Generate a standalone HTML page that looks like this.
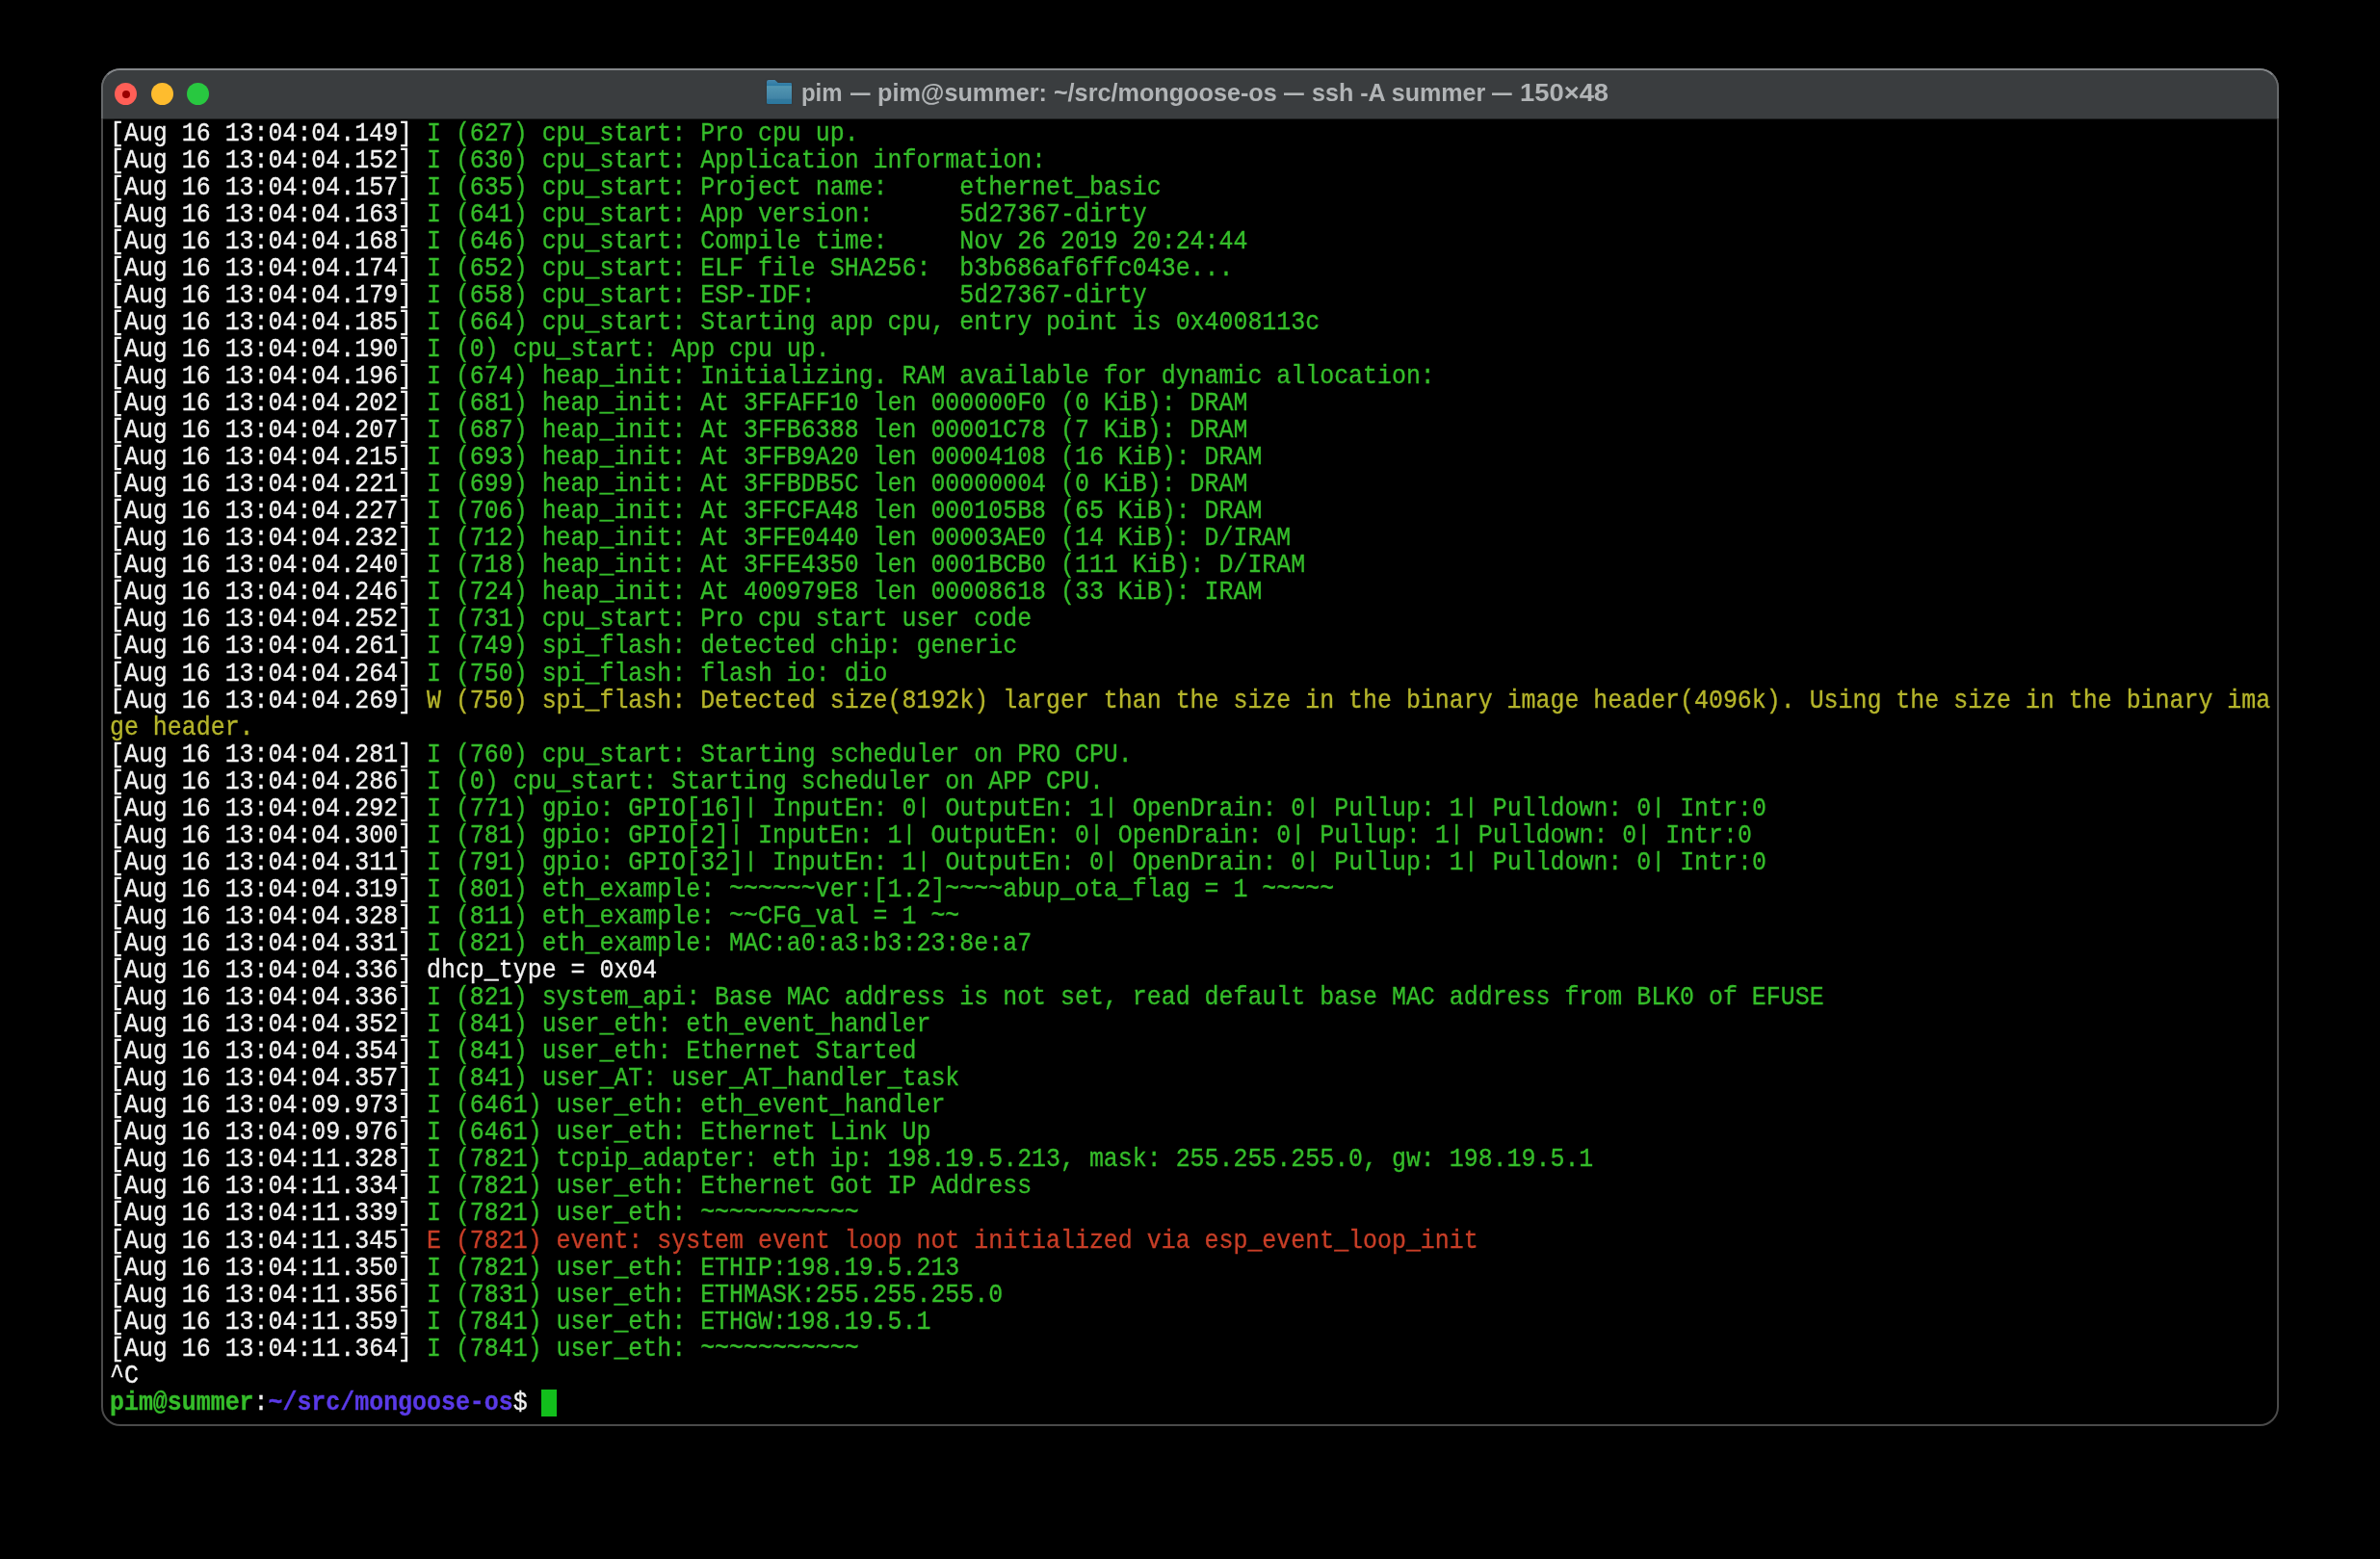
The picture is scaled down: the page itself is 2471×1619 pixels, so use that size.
<!DOCTYPE html>
<html><head><meta charset="utf-8">
<style>
html,body{margin:0;padding:0;background:#000;width:2471px;height:1619px;overflow:hidden;}
.win{position:absolute;left:105px;top:71px;width:2261px;height:1410px;box-sizing:border-box;border:2px solid #4a4a4a;border-radius:20px;background:#000;overflow:hidden;}
.tb{position:absolute;left:0;top:0;right:0;height:50px;background:#3a3d3f;border-bottom:1px solid #1e2021;}
.tbhl{position:absolute;left:105px;top:71px;width:2261px;height:52px;box-sizing:border-box;border-top:2px solid #84878a;border-left:2px solid #65686a;border-right:2px solid #65686a;border-radius:20px 20px 0 0;pointer-events:none;}
.dot{position:absolute;width:23px;height:23px;border-radius:50%;top:86px;}
.title{position:absolute;top:80px;left:832px;font-family:"Liberation Sans",sans-serif;font-weight:bold;font-size:26.6px;color:#b1b4b6;white-space:pre;line-height:32px;transform-origin:0 0;}
.folder{position:absolute;left:795.8px;top:82.9px;width:26.5px;height:25px;filter:drop-shadow(0 0.5px 0.8px rgba(0,0,0,0.2));}
.term{position:absolute;left:113.8px;top:124.6px;font-family:"Liberation Mono",monospace;font-size:28px;line-height:28.055px;color:#f2f2f2;transform:scaleX(0.89);transform-origin:0 0;-webkit-text-stroke:0.35px currentColor;}
.l{height:28.055px;white-space:pre;}
.pp{display:inline-block;transform:translateY(-2.6px) scaleY(0.76);transform-origin:50% 62%;}
.pg{color:#35bd2a;font-weight:bold;}
.pb{color:#5a3ae8;font-weight:bold;}
.cur{position:absolute;left:562.4px;top:1443px;width:15.2px;height:28.2px;background:#12bf1c;}
</style></head><body>
<div class="win"><div class="tb"></div></div>
<div class="tbhl"></div>
<div class="dot" style="left:119px;background:#ff5f57;"><div style="position:absolute;left:7.5px;top:7.5px;width:8px;height:8px;border-radius:50%;background:#9a0000;"></div></div>
<div class="dot" style="left:157px;background:#febc2e;"></div>
<div class="dot" style="left:194px;background:#28c840;"></div>
<svg class="folder" viewBox="0 0 26.5 25"><defs><linearGradient id="fb" x1="0" y1="0" x2="0" y2="1"><stop offset="0" stop-color="#4787ad"/><stop offset="0.25" stop-color="#2a7aa3"/><stop offset="0.35" stop-color="#1e6c96"/></linearGradient><linearGradient id="ff" x1="0" y1="0" x2="0" y2="1"><stop offset="0" stop-color="#5b9db5"/><stop offset="0.08" stop-color="#5194b0"/><stop offset="0.7" stop-color="#4184a6"/><stop offset="0.72" stop-color="#34799c"/><stop offset="1" stop-color="#2a789f"/></linearGradient></defs><path d="M0 2 Q0 0 2 0 L8.5 0 L11.8 3 L24.8 3 Q26.5 3 26.5 4.8 L26.5 23.2 Q26.5 25 24.8 25 L1.8 25 Q0 25 0 23.2 Z" fill="url(#fb)"/><path d="M0 6.3 L26.5 6.3 L26.5 23.2 Q26.5 25 24.8 25 L1.8 25 Q0 25 0 23.2 Z" fill="url(#ff)"/></svg>
<div class="title" style="left:832.4px;transform:scaleX(0.9)">pim</div>
<div class="title" style="left:883.2px;transform:scaleX(0.771)">—</div>
<div class="title" style="left:911px;transform:scaleX(0.948)">pim@summer: ~/src/mongoose-os</div>
<div class="title" style="left:1333.4px;transform:scaleX(0.782)">—</div>
<div class="title" style="left:1361.7px;transform:scaleX(0.943)">ssh -A summer</div>
<div class="title" style="left:1549.3px;transform:scaleX(0.778)">—</div>
<div class="title" style="left:1577.9px;transform:scaleX(1.029)">150×48</div>
<div class="term">
<div class="l">[Aug 16 13:04:04.149] <span style="color:#35bd2a">I (627) cpu_start: Pro cpu up.</span></div>
<div class="l">[Aug 16 13:04:04.152] <span style="color:#35bd2a">I (630) cpu_start: Application information:</span></div>
<div class="l">[Aug 16 13:04:04.157] <span style="color:#35bd2a">I (635) cpu_start: Project name:     ethernet_basic</span></div>
<div class="l">[Aug 16 13:04:04.163] <span style="color:#35bd2a">I (641) cpu_start: App version:      5d27367-dirty</span></div>
<div class="l">[Aug 16 13:04:04.168] <span style="color:#35bd2a">I (646) cpu_start: Compile time:     Nov 26 2019 20:24:44</span></div>
<div class="l">[Aug 16 13:04:04.174] <span style="color:#35bd2a">I (652) cpu_start: ELF file SHA256:  b3b686af6ffc043e...</span></div>
<div class="l">[Aug 16 13:04:04.179] <span style="color:#35bd2a">I (658) cpu_start: ESP-IDF:          5d27367-dirty</span></div>
<div class="l">[Aug 16 13:04:04.185] <span style="color:#35bd2a">I (664) cpu_start: Starting app cpu, entry point is 0x4008113c</span></div>
<div class="l">[Aug 16 13:04:04.190] <span style="color:#35bd2a">I (0) cpu_start: App cpu up.</span></div>
<div class="l">[Aug 16 13:04:04.196] <span style="color:#35bd2a">I (674) heap_init: Initializing. RAM available for dynamic allocation:</span></div>
<div class="l">[Aug 16 13:04:04.202] <span style="color:#35bd2a">I (681) heap_init: At 3FFAFF10 len 000000F0 (0 KiB): DRAM</span></div>
<div class="l">[Aug 16 13:04:04.207] <span style="color:#35bd2a">I (687) heap_init: At 3FFB6388 len 00001C78 (7 KiB): DRAM</span></div>
<div class="l">[Aug 16 13:04:04.215] <span style="color:#35bd2a">I (693) heap_init: At 3FFB9A20 len 00004108 (16 KiB): DRAM</span></div>
<div class="l">[Aug 16 13:04:04.221] <span style="color:#35bd2a">I (699) heap_init: At 3FFBDB5C len 00000004 (0 KiB): DRAM</span></div>
<div class="l">[Aug 16 13:04:04.227] <span style="color:#35bd2a">I (706) heap_init: At 3FFCFA48 len 000105B8 (65 KiB): DRAM</span></div>
<div class="l">[Aug 16 13:04:04.232] <span style="color:#35bd2a">I (712) heap_init: At 3FFE0440 len 00003AE0 (14 KiB): D/IRAM</span></div>
<div class="l">[Aug 16 13:04:04.240] <span style="color:#35bd2a">I (718) heap_init: At 3FFE4350 len 0001BCB0 (111 KiB): D/IRAM</span></div>
<div class="l">[Aug 16 13:04:04.246] <span style="color:#35bd2a">I (724) heap_init: At 400979E8 len 00008618 (33 KiB): IRAM</span></div>
<div class="l">[Aug 16 13:04:04.252] <span style="color:#35bd2a">I (731) cpu_start: Pro cpu start user code</span></div>
<div class="l">[Aug 16 13:04:04.261] <span style="color:#35bd2a">I (749) spi_flash: detected chip: generic</span></div>
<div class="l">[Aug 16 13:04:04.264] <span style="color:#35bd2a">I (750) spi_flash: flash io: dio</span></div>
<div class="l">[Aug 16 13:04:04.269] <span style="color:#b5b52b">W (750) spi_flash: Detected size(8192k) larger than the size in the binary image header(4096k). Using the size in the binary ima</span></div>
<div class="l"><span style="color:#b5b52b">ge header.</span></div>
<div class="l">[Aug 16 13:04:04.281] <span style="color:#35bd2a">I (760) cpu_start: Starting scheduler on PRO CPU.</span></div>
<div class="l">[Aug 16 13:04:04.286] <span style="color:#35bd2a">I (0) cpu_start: Starting scheduler on APP CPU.</span></div>
<div class="l">[Aug 16 13:04:04.292] <span style="color:#35bd2a">I (771) gpio: GPIO[16]<span class="pp">|</span> InputEn: 0<span class="pp">|</span> OutputEn: 1<span class="pp">|</span> OpenDrain: 0<span class="pp">|</span> Pullup: 1<span class="pp">|</span> Pulldown: 0<span class="pp">|</span> Intr:0</span></div>
<div class="l">[Aug 16 13:04:04.300] <span style="color:#35bd2a">I (781) gpio: GPIO[2]<span class="pp">|</span> InputEn: 1<span class="pp">|</span> OutputEn: 0<span class="pp">|</span> OpenDrain: 0<span class="pp">|</span> Pullup: 1<span class="pp">|</span> Pulldown: 0<span class="pp">|</span> Intr:0</span></div>
<div class="l">[Aug 16 13:04:04.311] <span style="color:#35bd2a">I (791) gpio: GPIO[32]<span class="pp">|</span> InputEn: 1<span class="pp">|</span> OutputEn: 0<span class="pp">|</span> OpenDrain: 0<span class="pp">|</span> Pullup: 1<span class="pp">|</span> Pulldown: 0<span class="pp">|</span> Intr:0</span></div>
<div class="l">[Aug 16 13:04:04.319] <span style="color:#35bd2a">I (801) eth_example: ~~~~~~ver:[1.2]~~~~abup_ota_flag = 1 ~~~~~</span></div>
<div class="l">[Aug 16 13:04:04.328] <span style="color:#35bd2a">I (811) eth_example: ~~CFG_val = 1 ~~</span></div>
<div class="l">[Aug 16 13:04:04.331] <span style="color:#35bd2a">I (821) eth_example: MAC:a0:a3:b3:23:8e:a7</span></div>
<div class="l">[Aug 16 13:04:04.336] dhcp_type = 0x04</div>
<div class="l">[Aug 16 13:04:04.336] <span style="color:#35bd2a">I (821) system_api: Base MAC address is not set, read default base MAC address from BLK0 of EFUSE</span></div>
<div class="l">[Aug 16 13:04:04.352] <span style="color:#35bd2a">I (841) user_eth: eth_event_handler</span></div>
<div class="l">[Aug 16 13:04:04.354] <span style="color:#35bd2a">I (841) user_eth: Ethernet Started</span></div>
<div class="l">[Aug 16 13:04:04.357] <span style="color:#35bd2a">I (841) user_AT: user_AT_handler_task</span></div>
<div class="l">[Aug 16 13:04:09.973] <span style="color:#35bd2a">I (6461) user_eth: eth_event_handler</span></div>
<div class="l">[Aug 16 13:04:09.976] <span style="color:#35bd2a">I (6461) user_eth: Ethernet Link Up</span></div>
<div class="l">[Aug 16 13:04:11.328] <span style="color:#35bd2a">I (7821) tcpip_adapter: eth ip: 198.19.5.213, mask: 255.255.255.0, gw: 198.19.5.1</span></div>
<div class="l">[Aug 16 13:04:11.334] <span style="color:#35bd2a">I (7821) user_eth: Ethernet Got IP Address</span></div>
<div class="l">[Aug 16 13:04:11.339] <span style="color:#35bd2a">I (7821) user_eth: ~~~~~~~~~~~</span></div>
<div class="l">[Aug 16 13:04:11.345] <span style="color:#c83e27">E (7821) event: system event loop not initialized via esp_event_loop_init</span></div>
<div class="l">[Aug 16 13:04:11.350] <span style="color:#35bd2a">I (7821) user_eth: ETHIP:198.19.5.213</span></div>
<div class="l">[Aug 16 13:04:11.356] <span style="color:#35bd2a">I (7831) user_eth: ETHMASK:255.255.255.0</span></div>
<div class="l">[Aug 16 13:04:11.359] <span style="color:#35bd2a">I (7841) user_eth: ETHGW:198.19.5.1</span></div>
<div class="l">[Aug 16 13:04:11.364] <span style="color:#35bd2a">I (7841) user_eth: ~~~~~~~~~~~</span></div>
<div class="l">^C</div>
<div class="l"><b class="pg">pim@summer</b>:<b class="pb">~/src/mongoose-os</b>$ </div>
</div>
<div class="cur"></div>
</body></html>
